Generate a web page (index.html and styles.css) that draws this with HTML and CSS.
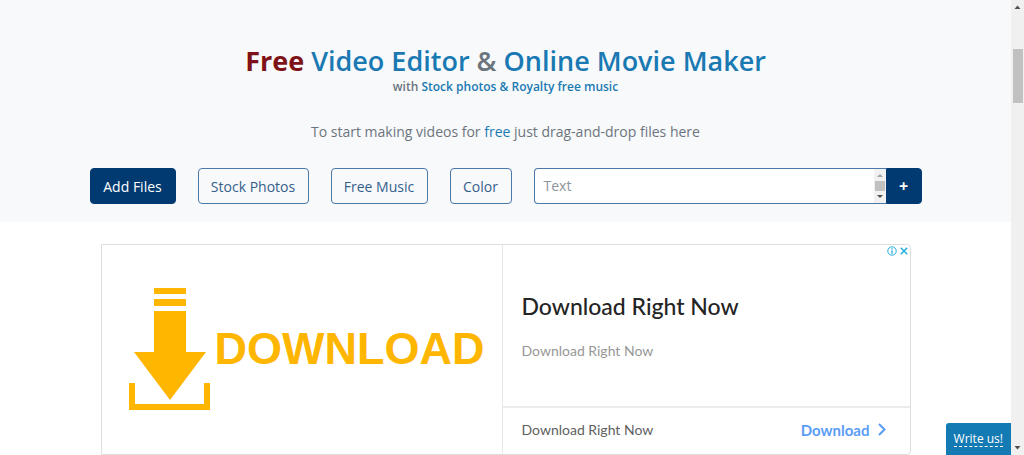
FILE: index.html
```html
<!DOCTYPE html>
<html lang="en">
<head>
<meta charset="utf-8">
<title>Free Video Editor &amp; Online Movie Maker</title>
<link rel="stylesheet" href="styles.css">
</head>
<body>
<div class="page">
  <main class="content">
    <section class="hero">
      <h1 class="title"><span class="title-free">Free</span> <span class="accent">Video Editor</span> &amp; <span class="accent">Online Movie Maker</span></h1>
      <p class="subtitle">with <span class="accent">Stock photos &amp; Royalty free music</span></p>
      <p class="hint">To start making videos for <span class="accent">free</span> just drag-and-drop files here</p>
      <div class="toolbar">
        <button class="btn btn-primary btn-files" type="button">Add Files</button>
        <button class="btn btn-photos" type="button">Stock Photos</button>
        <button class="btn btn-music" type="button">Free Music</button>
        <button class="btn btn-color" type="button">Color</button>
        <div class="text-group">
          <textarea class="text-input" rows="1" placeholder="Text" aria-label="Text"></textarea>
          <div class="mini-scroll" aria-hidden="true">
            <svg width="8" height="4" viewBox="0 0 8 4"><path d="M1 4 4 1l3 3z" fill="#a3a3a3"/></svg>
            <span class="mini-thumb"></span>
            <svg width="8" height="4" viewBox="0 0 8 4"><path d="M1 0h6L4 3z" fill="#505050"/></svg>
          </div>
          <button class="btn btn-primary btn-plus" type="button" aria-label="Add text">+</button>
        </div>
      </div>
    </section>
    <section class="ad">
      <div class="ad-image">
        <svg class="ad-arrow" width="82" height="124" viewBox="0 0 82 124" fill="#ffb600" aria-hidden="true">
          <path d="M25 1h32v6H25zM25 12h32v7H25zM25 24h32v41h20L41 113 5 65h20zM0 96h6v21h69V96h6v27H0z"/>
        </svg>
        <span class="ad-word">DOWNLOAD</span>
      </div>
      <div class="ad-text">
        <div class="ad-main">
          <h2 class="ad-title">Download Right Now</h2>
          <p class="ad-desc">Download Right Now</p>
        </div>
        <div class="ad-footer">
          <span>Download Right Now</span>
          <a class="ad-link" href="#">Download
            <svg width="8" height="13" viewBox="0 0 8 13" fill="none" stroke="#5b9df5" stroke-width="2"><path d="M1 1l5.500 5.500L1 12"/></svg>
          </a>
        </div>
      </div>
      <div class="ad-choices">
        <button class="ad-icon" type="button" aria-label="Ad information">
          <svg width="10" height="10" viewBox="0 0 10 10" fill="none" stroke="#20aeda"><circle cx="5" cy="5" r="4.200"/><path d="M5 4.200v3.500M5 2.200v1.200" stroke-width="1.300"/></svg>
        </button>
        <button class="ad-icon" type="button" aria-label="Close ad">
          <svg width="8" height="8" viewBox="0 0 8 8" fill="none" stroke="#20aeda" stroke-width="1.500"><path d="M.8.8l6.400 6.400M7.200.8L.8 7.200"/></svg>
        </button>
      </div>
    </section>
    <a class="write" href="#"><span class="write-label">Write us!</span></a>
  </main>
  <div class="scrollbar" aria-hidden="true">
    <svg width="7" height="4" viewBox="0 0 7 4"><path d="M.5 4l3-3.500 3 3.500z" fill="#505050"/></svg>
    <span class="thumb"></span>
    <svg width="7" height="4" viewBox="0 0 7 4"><path d="M.5 0h6l-3 3.500z" fill="#505050"/></svg>
  </div>
</div>
</body>
</html>
```
FILE: styles.css
```css
* { box-sizing: border-box; }
body {
  margin: 0;
  background: #fff;
  color: #6c757d;
  font-family: "Open Sans", "Noto Sans", sans-serif;
}
h1, h2, p { margin: 0; }
button { font-family: inherit; cursor: pointer; }
.page { display: flex; height: 100vh; overflow: hidden; }
.content { position: relative; flex: 1; min-width: 0; overflow: hidden; }
.hero {
  display: flex;
  flex-direction: column;
  align-items: center;
  padding: 44px 24px 18px;
  background: #f8f9fb;
  text-align: center;
}
.title { font-size: 27px; line-height: 34px; font-weight: 600; }
.title-free { color: #7f1216; font-weight: 700; }
.accent { color: #1a79b3; }
.subtitle { font-size: 12px; line-height: 18px; font-weight: 600; }
.hint { margin-top: 26px; font-size: 14px; line-height: 20px; }
.toolbar {
  display: flex;
  gap: 22px;
  width: 100%;
  max-width: 832px;
  margin-top: 26px;
}
.btn {
  height: 36px;
  padding: 0;
  border: 1px solid #4a78a8;
  border-radius: 4px;
  background: transparent;
  color: #355f8b;
  font-size: 14px;
}
.btn-primary { border-color: #003a70; background: #003a70; color: #fff; }
.btn-files { width: 86px; }
.btn-photos { width: 111px; }
.btn-music { width: 97px; }
.btn-color { width: 62px; }
.text-group { display: flex; flex: 1; min-width: 0; }
.text-input {
  flex: 1;
  min-width: 0;
  height: 36px;
  padding: 7px 9px;
  border: 1px solid #4a78a8;
  border-right: 0;
  border-radius: 4px 0 0 4px;
  background: #fff;
  font-family: inherit;
  font-size: 14px;
  line-height: 20px;
  resize: none;
  overflow: hidden;
}
.text-input::placeholder { color: #8d949b; }
.mini-scroll {
  display: flex;
  flex-direction: column;
  justify-content: space-between;
  align-items: center;
  width: 12px;
  padding: 4px 0;
  border: solid #4a78a8;
  border-width: 1px 0;
  background: #f1f1f1;
}
.mini-thumb { width: 10px; height: 10px; background: #c1c1c1; }
.btn-plus { width: 36px; border-radius: 0 4px 4px 0; font-size: 16px; font-weight: 700; }
.ad {
  position: relative;
  display: flex;
  width: calc(100% - 48px);
  max-width: 810px;
  height: 211px;
  margin: 22px auto 0;
  border: 1px solid #dedede;
  border-radius: 0 4px 4px 0;
}
.ad-image {
  display: flex;
  align-items: center;
  gap: 4px;
  width: 401px;
  padding: 0 0 2px 27px;
  border-right: 1px solid #e8e8e8;
}
.ad-word {
  color: #ffb600;
  font-family: "Liberation Sans", Arial, sans-serif;
  font-size: 45px;
  font-weight: 700;
}
.ad-text { display: flex; flex: 1; flex-direction: column; min-width: 0; font-family: Lato, sans-serif; }
.ad-main { flex: 1; padding: 44px 19px 0; }
.ad-title { color: #242424; font-size: 23px; line-height: 34px; font-weight: 500; }
.ad-desc { margin-top: 18px; color: #979797; font-size: 14px; line-height: 20px; }
.ad-footer {
  display: flex;
  align-items: center;
  justify-content: space-between;
  height: 48px;
  padding: 0 24px 3px 19px;
  border-top: 2px solid #ececec;
  color: #606060;
  font-size: 14px;
}
.ad-link {
  display: flex;
  align-items: center;
  gap: 8px;
  color: #5b9df5;
  font-size: 15px;
  font-weight: 700;
  text-decoration: none;
}
.ad-choices { position: absolute; top: 1px; right: 1px; display: flex; gap: 2px; }
.ad-icon {
  display: flex;
  align-items: center;
  justify-content: center;
  width: 10px;
  height: 10px;
  padding: 0;
  border: 0;
  background: none;
}
.write {
  position: absolute;
  right: 0;
  bottom: 0;
  padding: 8px 8px;
  border-radius: 3px 0 0 0;
  background: #147ab3;
  color: #fff;
  font-size: 12px;
  line-height: 15px;
  text-decoration: none;
}
.write-label { display: block; border-bottom: 1px dashed #fff; }
.scrollbar {
  display: flex;
  flex-direction: column;
  align-items: center;
  width: 13px;
  padding: 5px 0;
  background: #f0f0f0;
}
.thumb { width: 10px; height: 54px; margin: 40px 0 auto; background: #c1c1c1; }
```
